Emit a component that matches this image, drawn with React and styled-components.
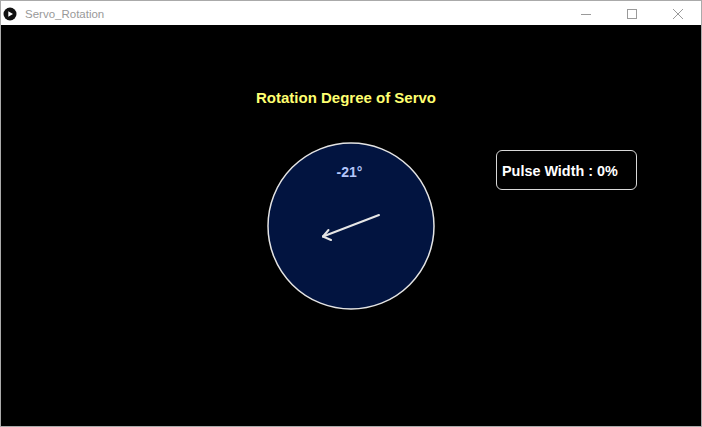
import React from "react";
import styled, { createGlobalStyle } from "styled-components";

const Global = createGlobalStyle`
  html, body { margin: 0; padding: 0; background: #ffffff; }
  * { box-sizing: border-box; }
`;

const Frame = styled.div`
  width: 702px;
  height: 427px;
  border: 1px solid #aaaaaa;
  display: flex;
  flex-direction: column;
  background: #ffffff;
  overflow: hidden;
`;

const TitleBar = styled.div`
  height: 24px;
  display: flex;
  align-items: center;
  background: #ffffff;
  flex: none;
`;

const AppIcon = styled.svg`
  width: 14px;
  height: 14px;
  margin-left: 2px;
  margin-top: 2px;
  flex: none;
`;

const WindowTitle = styled.span`
  margin-left: 8px;
  padding-top: 1px;
  font-family: "Liberation Sans", Arial, sans-serif;
  font-size: 11.5px;
  color: #999999;
  flex: 1;
`;

const CaptionButton = styled.div`
  width: 46px;
  height: 24px;
  display: flex;
  align-items: center;
  justify-content: center;
  flex: none;
  padding-top: 1px;
`;

const Canvas = styled.div`
  flex: 1;
  background: #000000;
  padding-top: 65px;
  display: flex;
  flex-direction: column;
  font-family: "Liberation Sans", Arial, sans-serif;
  font-weight: bold;
  font-size: 14px;
`;

const Heading = styled.div`
  padding-left: 255px;
  line-height: 16px;
  height: 16px;
  font-size: 15px;
  color: #ffff70;
`;

const Row = styled.div`
  margin-top: 36px;
  padding-left: 265px;
  display: flex;
  align-items: flex-start;
`;

const Dial = styled.svg`
  width: 170px;
  height: 170px;
  flex: none;
`;

const PulseBox = styled.div`
  margin-left: 60px;
  margin-top: 8px;
  width: 141px;
  height: 40px;
  border: 1.5px solid #d8d8d8;
  border-radius: 6px;
  display: flex;
  align-items: center;
  padding-left: 5px;
  padding-top: 1px;
  color: #ffffff;
  font-size: 14.4px;
  line-height: 16px;
`;

export default function App() {
  const glyph = "#9a9a9a";
  return (
    <>
      <Global />
      <Frame>
        <TitleBar>
          <AppIcon viewBox="0 0 14 14">
            <circle cx="7" cy="7" r="6.5" fill="#111" />
            <path d="M5.3 4.2 L10 7 L5.3 9.8 Z" fill="#fff" />
          </AppIcon>
          <WindowTitle>Servo_Rotation</WindowTitle>
          <CaptionButton>
            <svg width="12" height="12" viewBox="0 0 12 12">
              <line x1="1" y1="6.5" x2="11" y2="6.5" stroke={glyph} strokeWidth="1" />
            </svg>
          </CaptionButton>
          <CaptionButton>
            <svg width="12" height="12" viewBox="0 0 12 12">
              <rect x="1.5" y="1.5" width="9" height="9" fill="none" stroke={glyph} strokeWidth="1" />
            </svg>
          </CaptionButton>
          <CaptionButton>
            <svg width="12" height="12" viewBox="0 0 12 12">
              <path d="M1 1 L11 11 M11 1 L1 11" stroke={glyph} strokeWidth="1" />
            </svg>
          </CaptionButton>
        </TitleBar>
        <Canvas>
          <Heading>Rotation Degree of Servo</Heading>
          <Row>
            <Dial viewBox="0 0 170 170">
              <circle cx="85" cy="84" r="83" fill="#021440" stroke="#e4e4e4" strokeWidth="1.5" />
              <text
                x="83.5"
                y="34.5"
                textAnchor="middle"
                fill="#b4c6fa"
                fontFamily="Liberation Sans, Arial, sans-serif"
                fontWeight="bold"
                fontSize="14"
              >
                -21°
              </text>
              <g stroke="#e6e6e6" strokeWidth="2" strokeLinecap="round" fill="none">
                <line x1="113" y1="73" x2="57" y2="94.5" />
                <line x1="57" y1="94.5" x2="62.5" y2="88" />
                <line x1="57" y1="94.5" x2="65" y2="98" />
              </g>
            </Dial>
            <PulseBox>Pulse Width : 0%</PulseBox>
          </Row>
        </Canvas>
      </Frame>
    </>
  );
}
